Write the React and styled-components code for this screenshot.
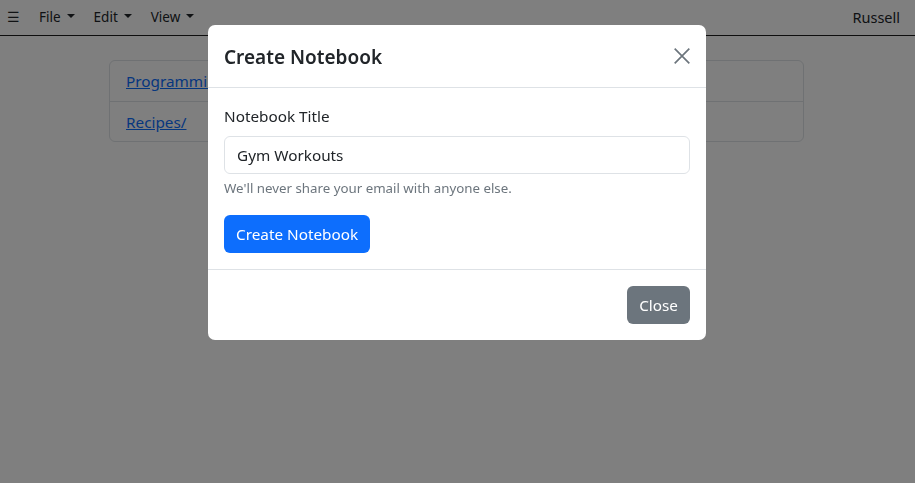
import React from 'react'
import styled, { createGlobalStyle } from 'styled-components'

const GlobalStyle = createGlobalStyle`
  html, body {
    margin: 0;
    padding: 0;
    height: 100%;
    background: #fff;
    font-family: 'Noto Sans', 'Open Sans', sans-serif;
    color: #212529;
  }
  #root {
    min-height: 100%;
  }
  * {
    box-sizing: border-box;
  }
`

const Page = styled.div`
  width: 100%;
  height: 483px;
  overflow: hidden;
`

const TopBar = styled.nav`
  height: 36px;
  display: flex;
  align-items: center;
  justify-content: space-between;
  padding: 0 15px 1px 7px;
  border-bottom: 1px solid #1c1c1c;
  font-size: 13.5px;
`

const MenuGroup = styled.div`
  display: flex;
  align-items: center;
  gap: 19px;
`

const MenuItem = styled.span`
  display: inline-flex;
  align-items: center;
  gap: 6px;
  &::after {
    content: '';
    display: ${p => (p.caret ? 'inline-block' : 'none')};
    border-top: 4px solid #212529;
    border-left: 4px solid transparent;
    border-right: 4px solid transparent;
    margin-top: -2px;
  }
`

const UserName = styled.span`
  font-size: 14.5px;
`

const Content = styled.main`
  padding: 24px 111px 24px 109px;
`

const ListGroup = styled.ul`
  list-style: none;
  margin: 0;
  padding: 0;
  border: 1px solid #dee2e6;
  border-radius: 6px;
`

const ListItem = styled.li`
  padding: 0 16px;
  height: 40px;
  display: flex;
  align-items: center;
  border-top: ${p => (p.first ? 'none' : '1px solid #dee2e6')};
  font-size: 15.3px;
`

const ItemLink = styled.a`
  color: #0d6efd;
  text-decoration: underline;
`

const Backdrop = styled.div`
  position: fixed;
  inset: 0;
  background: rgba(0, 0, 0, 0.5);
  z-index: 10;
`

const ModalDialog = styled.div`
  position: fixed;
  top: 25px;
  left: calc(50% - 249.5px);
  width: 498px;
  background: #fff;
  border-radius: 7px;
  z-index: 20;
  overflow: hidden;
`

const ModalHeader = styled.div`
  display: flex;
  align-items: center;
  justify-content: space-between;
  padding: 16px 16px;
  height: 63px;
  border-bottom: 1px solid #dee2e6;
`

const ModalTitle = styled.h5`
  margin: 0;
  font-size: 19px;
  font-weight: 600;
  line-height: 30px;
  color: #212529;
  padding-top: 2px;
`

const CloseX = styled.button`
  border: 0;
  background: transparent;
  padding: 0;
  width: 20px;
  height: 20px;
  display: flex;
  align-items: center;
  justify-content: center;
  margin-right: -2px;
  cursor: pointer;
`

const ModalBody = styled.div`
  padding: 16px 16px;
  height: 182px;
  border-bottom: 1px solid #dee2e6;
`

const Label = styled.label`
  display: block;
  font-size: 15.3px;
  line-height: 24px;
  margin-bottom: 8px;
`

const TextInput = styled.input`
  display: block;
  width: 100%;
  height: 38px;
  padding: 6px 12px;
  font-family: inherit;
  font-size: 15.3px;
  color: #212529;
  border: 1px solid #dee2e6;
  border-radius: 6px;
  outline: none;
`

const HelpText = styled.div`
  margin-top: 4px;
  font-size: 13.3px;
  line-height: 21px;
  color: #6c757d;
`

const Button = styled.button`
  display: inline-block;
  height: 38px;
  padding: 0 12px;
  font-family: inherit;
  font-size: 15.3px;
  line-height: 24px;
  color: #fff;
  background: ${p => (p.variant === 'secondary' ? '#6c757d' : '#0d6efd')};
  border: 0;
  border-radius: 6px;
  margin-top: ${p => p.mt || 0}px;
  cursor: pointer;
`

const ModalFooter = styled.div`
  display: flex;
  justify-content: flex-end;
  align-items: center;
  padding: 16px;
  height: 70px;
`

export default function App() {
  return (
    <Page>
      <GlobalStyle />
      <TopBar>
        <MenuGroup>
          <MenuItem>☰</MenuItem>
          <MenuItem caret>File</MenuItem>
          <MenuItem caret>Edit</MenuItem>
          <MenuItem caret>View</MenuItem>
        </MenuGroup>
        <UserName>Russell</UserName>
      </TopBar>
      <Content>
        <ListGroup>
          <ListItem first>
            <ItemLink href="#">Programming/</ItemLink>
          </ListItem>
          <ListItem>
            <ItemLink href="#">Recipes/</ItemLink>
          </ListItem>
        </ListGroup>
      </Content>
      <Backdrop />
      <ModalDialog>
        <ModalHeader>
          <ModalTitle>Create Notebook</ModalTitle>
          <CloseX aria-label="Close">
            <svg width="18" height="18" viewBox="0 0 16 16">
              <path d="M1.5 1.5 L14.5 14.5 M14.5 1.5 L1.5 14.5" stroke="#6c757d" strokeWidth="1.5" fill="none" />
            </svg>
          </CloseX>
        </ModalHeader>
        <ModalBody>
          <Label>Notebook Title</Label>
          <TextInput defaultValue="Gym Workouts" />
          <HelpText>We'll never share your email with anyone else.</HelpText>
          <Button mt={16}>Create Notebook</Button>
        </ModalBody>
        <ModalFooter>
          <Button variant="secondary">Close</Button>
        </ModalFooter>
      </ModalDialog>
    </Page>
  )
}
